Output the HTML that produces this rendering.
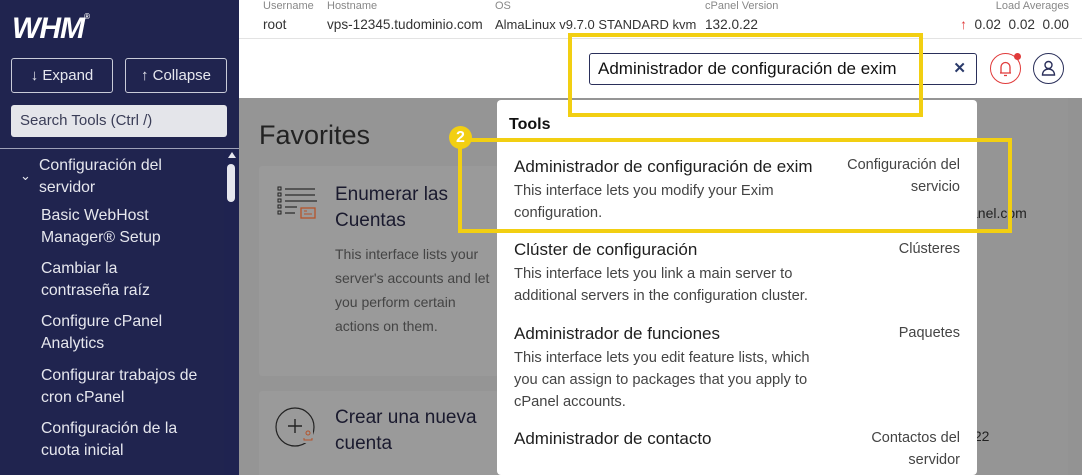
<!DOCTYPE html>
<html><head><meta charset="utf-8"><style>
*{box-sizing:border-box;margin:0;padding:0}
html,body{width:1082px;height:475px;overflow:hidden}
body{position:relative;font-family:"Liberation Sans",sans-serif;background:#959595}
.side{position:absolute;left:0;top:0;width:239px;height:475px;background:#20244f;color:#e6e7ee}
.logo{position:absolute;left:12px;top:12px;font:italic 900 30px "Liberation Sans",sans-serif;color:#fff;letter-spacing:-1px}
.btn{position:absolute;top:58px;height:35px;border:1px solid #c9cbd8;border-radius:3px;color:#e6e7ee;font-size:15px;line-height:33px;text-align:center}
.search{position:absolute;left:11px;top:105px;width:216px;height:32px;background:#e4e5ea;border-radius:3px;color:#3a3d57;font-size:15px;line-height:32px;padding-left:9px}
.sep{position:absolute;left:0;top:148px;width:239px;height:1px;background:#9ea1b8}
.item{position:absolute;left:41px;font-size:15.8px;line-height:22px;color:#e6e7ee}
.scroll{position:absolute;left:224px;top:150px;width:15px;height:325px;background:#1f2350}
.head{position:absolute;left:239px;top:0;width:843px;height:98px;background:#fff}
.lab{position:absolute;top:0;font-size:11px;color:#888;}
.val{position:absolute;top:17px;font-size:13.6px;color:#333;white-space:nowrap}
.card{position:absolute;left:259px;width:240px;background:#9a9a9a;border-radius:3px}
.dd{position:absolute;left:497px;top:100px;width:480px;height:375px;background:#fff;border-radius:4px}
.t{position:absolute;left:17px;font-size:17px;color:#1e1e1e}
.d{position:absolute;left:17px;font-size:14.7px;line-height:22px;color:#444;width:310px}
.c{position:absolute;right:17px;font-size:14.5px;line-height:22px;color:#444;text-align:right}
.yb{position:absolute;border:4px solid #f2cf12}
</style></head><body>
<div class="side">
<div class="logo">WHM<span style="font-size:8px;vertical-align:top">®</span></div>
<div class="btn" style="left:11px;width:102px">↓ Expand</div>
<div class="btn" style="left:125px;width:102px">↑ Collapse</div>
<div class="search">Search Tools (Ctrl /)</div>
<div class="sep"></div>
<div class="item" style="left:20px;top:165px;font-size:13px">⌄</div>
<div class="item" style="left:39px;top:155px">Configuración del<br>servidor</div>
<div class="item" style="top:205px">Basic WebHost<br>Manager® Setup</div>
<div class="item" style="top:258px">Cambiar la<br>contraseña raíz</div>
<div class="item" style="top:311px">Configure cPanel<br>Analytics</div>
<div class="item" style="top:365px">Configurar trabajos de<br>cron cPanel</div>
<div class="item" style="top:418px">Configuración de la<br>cuota inicial</div>
<div class="scroll"><div style="position:absolute;left:4px;top:2px;border:4px solid transparent;border-bottom:6px solid #e6e7ee;border-top:0"></div><div style="position:absolute;left:3px;top:14px;width:8px;height:38px;border-radius:4px;background:#e6e7ee"></div></div>
</div>
<div class="head">
<div style="position:absolute;left:0;top:38px;width:843px;height:1px;background:#e3e3e3"></div>
<div class="lab" style="left:24px">Username</div><div class="val" style="left:24px">root</div>
<div class="lab" style="left:88px">Hostname</div><div class="val" style="left:88px">vps-12345.tudominio.com</div>
<div class="lab" style="left:256px">OS</div><div class="val" style="left:256px;font-size:13px">AlmaLinux v9.7.0 STANDARD kvm</div>
<div class="lab" style="left:466px">cPanel Version</div><div class="val" style="left:466px">132.0.22</div>
<div class="lab" style="right:13px">Load Averages</div><div class="val" style="right:13px"><span style="color:#e03a3a">↑</span>&nbsp; 0.02&nbsp; 0.02&nbsp; 0.00</div>
<div style="position:absolute;left:350px;top:53px;width:388px;height:32px;border:1px solid #2a2f5a;border-radius:3px;font-size:17px;line-height:30px;padding-left:8px;color:#111">Administrador de configuración de exim<span style="position:absolute;right:10px;color:#2a3a6a;font-weight:bold;font-size:15px">✕</span></div>
<div style="position:absolute;left:751px;top:53px;width:31px;height:31px;border:1px solid #e03a3a;border-radius:50%">
<svg width="29" height="29" viewBox="0 0 29 29"><path d="M10 19v-6a4.5 4.5 0 0 1 9 0v6zM9 19h11M13 21.5h3" fill="none" stroke="#e03a3a" stroke-width="1.3"/></svg></div>
<div style="position:absolute;left:775px;top:53px;width:7px;height:7px;border-radius:50%;background:#e03a3a"></div>
<div style="position:absolute;left:794px;top:53px;width:31px;height:31px;border:1px solid #2a2f5a;border-radius:50%">
<svg width="29" height="29" viewBox="0 0 29 29"><circle cx="14.5" cy="11" r="3.5" fill="none" stroke="#2a2f5a" stroke-width="1.4"/><path d="M8.5 21c0-4 3-6 6-6s6 2 6 6z" fill="none" stroke="#2a2f5a" stroke-width="1.4"/></svg></div>
</div>
<div style="position:absolute;left:259px;top:120px;font-size:27px;color:#222">Favorites</div>
<div class="card" style="top:166px;height:210px">
<svg style="position:absolute;left:18px;top:20px" width="42" height="34"><g fill="none" stroke="#222" stroke-width="1"><rect x="1" y="1" width="3" height="3"/><rect x="1" y="7" width="3" height="3"/><rect x="1" y="13" width="3" height="3"/><rect x="1" y="19" width="3" height="3"/><rect x="1" y="25" width="3" height="3"/></g><g stroke="#555" stroke-width="2"><path d="M8 3h30M8 9h30M8 15h32M8 21h12M8 27h10"/></g><rect x="24" y="22" width="14" height="10" fill="none" stroke="#b5532a" stroke-width="1.3"/><path d="M27 25h3M27 28h8" stroke="#b5532a"/></svg>
<div style="position:absolute;left:76px;top:16px;font-size:19px;line-height:26px;color:#1a1a2e">Enumerar las<br>Cuentas</div>
<div style="position:absolute;left:76px;top:76px;font-size:14px;line-height:24px;color:#444;width:164px;white-space:nowrap;overflow:hidden">This interface lists your<br>server's accounts and let<br>you perform certain<br>actions on them.</div>
</div>
<div class="card" style="top:391px;height:90px">
<svg style="position:absolute;left:16px;top:16px" width="44" height="44"><circle cx="20" cy="20" r="19" fill="none" stroke="#222" stroke-width="1.2"/><path d="M20 12v14M13 19h14" stroke="#222" stroke-width="1.4"/><rect x="28" y="24" width="10" height="12" fill="#9a9a9a"/><circle cx="33" cy="26" r="2" fill="none" stroke="#b5532a"/><path d="M29 31v2h8v-2" fill="none" stroke="#b5532a"/></svg>
<div style="position:absolute;left:76px;top:14px;font-size:19px;line-height:26px;color:#1a1a2e">Crear una nueva<br>cuenta</div>
</div>
<div style="position:absolute;left:970px;top:205px;font-size:14px;color:#222">anel.com</div>
<div style="position:absolute;left:970px;top:428px;font-size:14px;color:#222">.22</div>
<div style="position:absolute;left:1068px;top:98px;width:14px;height:377px;background:#939393"></div>
<div class="dd">
<div style="position:absolute;left:12px;top:16px;font-size:16px;font-weight:bold;color:#111">Tools</div>
<div class="t" style="top:57px">Administrador de configuración de exim</div>
<div class="d" style="top:80px">This interface lets you modify your Exim<br>configuration.</div>
<div class="c" style="top:54px">Configuración del<br>servicio</div>
<div class="t" style="top:140px">Clúster de configuración</div>
<div class="d" style="top:163px">This interface lets you link a main server to<br>additional servers in the configuration cluster.</div>
<div class="c" style="top:138px">Clústeres</div>
<div class="t" style="top:224px">Administrador de funciones</div>
<div class="d" style="top:247px">This interface lets you edit feature lists, which<br>you can assign to packages that you apply to<br>cPanel accounts.</div>
<div class="c" style="top:222px">Paquetes</div>
<div class="t" style="top:329px">Administrador de contacto</div>
<div class="c" style="top:327px">Contactos del<br>servidor</div>
</div>
<div class="yb" style="left:568px;top:33px;width:355px;height:84px"></div>
<div class="yb" style="left:458px;top:138px;width:554px;height:95px"></div>
<div style="position:absolute;left:449px;top:126px;width:23px;height:23px;border-radius:50%;background:#f2cf12;color:#fff;font-weight:bold;font-size:16px;text-align:center;line-height:23px">2</div>
</body></html>
